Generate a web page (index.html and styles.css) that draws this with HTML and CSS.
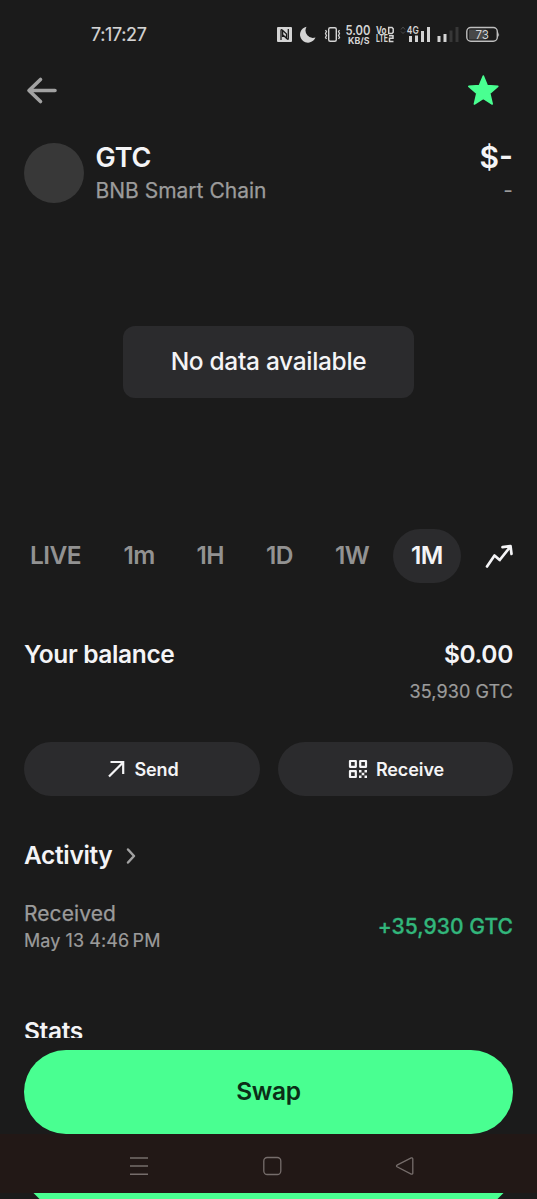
FILE: index.html
```html
<!DOCTYPE html>
<html lang="en">
<head>
<meta charset="utf-8">
<title>GTC</title>
<link rel="stylesheet" href="styles.css">
</head>
<body>
<div class="screen">
  <div class="status">
    <span class="clock">7:17:27</span>
    <svg class="status-icons" width="230" height="30" viewBox="274 20 230 30">
      <g fill="#d4d4d4">
        <rect x="277" y="27" width="15" height="15" rx="1"/>
        <path d="M281 40V30.500Q281 29 282.500 30.300L286.500 34V39M282.600 30V37M288.300 29V38.500Q288.300 40 287 38.800L283 35" fill="none" stroke="#1b1b1b" stroke-width="1.300"/>
        <path d="M306.500 26.800A8 8 0 1 0 315.500 37.500A7.500 7.500 0 0 1 306.500 26.800Z"/>
        <rect x="328.700" y="27.700" width="7.600" height="13.600" rx="1.500" fill="none" stroke="#d4d4d4" stroke-width="1.400"/>
        <path d="M325.500 30l1 1.500-1 2 1 2-1 2 1 1.500M339.500 30l-1 1.500 1 2-1 2 1 2-1 1.500" fill="none" stroke="#d4d4d4" stroke-width="1.300"/>
        <text x="345.500" y="35.300" class="rate" textLength="25" lengthAdjust="spacingAndGlyphs">5.00</text>
        <text x="348" y="43.700" class="unit" textLength="21.500" lengthAdjust="spacingAndGlyphs">KB/S</text>
        <text x="376" y="33.800" class="volte" textLength="10.500" lengthAdjust="spacingAndGlyphs">Vo</text>
        <text x="376" y="42.300" class="volte" textLength="12" lengthAdjust="spacingAndGlyphs">LTE</text>
        <path d="M388.700 27.500h3.300l1.200 1.200v3.500l-1.200 1.300h-3.300zM389 35.700h4v2.600h-3.500v3.300h4" fill="none" stroke="#d4d4d4" stroke-width="1.500"/>
        <path d="M401 29.500l2-2.500 2 2.500M401 31.500l2 2 2-2" fill="none" stroke="#4b4b4b" stroke-width="1"/>
        <text x="406.800" y="34.200" class="net" textLength="12" lengthAdjust="spacingAndGlyphs">4G</text>
        <path d="M409 36h3v6h-3zM415 35.500h3v6.500h-3zM421 31h3v11h-3zM427 27h3v15h-3zM437.500 36h3v6h-3zM443.500 34h3v8h-3z"/>
        <path d="M449.500 30.500h3v11.500h-3zM455.500 27h3v15h-3z" fill="#373737"/>
        <rect x="466.800" y="27.500" width="30.500" height="13.700" rx="4" fill="none" stroke="#bebebe" stroke-width="1.400"/>
        <path d="M469 29.500h17v10h-17z" fill="#484848"/>
        <path d="M498.300 32q1.500 2.500 0 5z"/>
        <text x="475.500" y="39.200" class="batt" textLength="13.500" lengthAdjust="spacingAndGlyphs">73</text>
      </g>
    </svg>
  </div>

  <div class="topbar">
    <svg class="back" width="32" height="30" viewBox="0 0 32 30"><path d="M29 15.500H3.500M14.500 4.500 3 15.500 14.500 26.500" fill="none" stroke="#a2a2a2" stroke-width="3.600" stroke-linecap="round" stroke-linejoin="round"/></svg>
    <svg class="star" width="32" height="32" viewBox="0 0 32 32"><path d="M16.300 2 20.200 11.500 30.800 12.400 22.700 19.300 25.200 30 16.300 24.400 7.400 30 9.900 19.300 1.800 12.400 12.400 11.500Z" fill="#49ff91" stroke="#49ff91" stroke-width="1.600" stroke-linejoin="round"/></svg>
  </div>

  <div class="token">
    <div class="avatar"></div>
    <div class="token-name"><div class="symbol">GTC</div><div class="chain">BNB Smart Chain</div></div>
    <div class="token-price"><div class="price">$-</div><div class="change">-</div></div>
  </div>

  <div class="chart"><div class="no-data">No data available</div></div>

  <div class="ranges">
    <span class="range">LIVE</span><span class="range">1m</span><span class="range">1H</span><span class="range">1D</span><span class="range">1W</span><span class="range active">1M</span>
    <svg class="trend" width="28" height="26" viewBox="0 0 28 26"><path d="M2 23.500 9.500 12.500 14.700 17 25 4M17.500 4.200 25.500 3 26.500 11" fill="none" stroke="#f4f4f6" stroke-width="2.700" stroke-linecap="round" stroke-linejoin="round"/></svg>
  </div>

  <div class="balance">
    <h2 class="heading">Your balance</h2>
    <div class="amounts"><div class="heading">$0.00</div><div class="qty">35,930 GTC</div></div>
  </div>

  <div class="actions">
    <div class="pill">
      <svg width="20" height="20" viewBox="0 0 20 20"><path d="M3 17.500 17 3.500M4.500 3H17.200V15" fill="none" stroke="#f4f4f6" stroke-width="2.200"/></svg>
      <span>Send</span>
    </div>
    <div class="pill">
      <svg width="20" height="20" viewBox="0 0 20 20"><path d="M2 2h5.800v5.800H2zM12.200 2H18v5.800h-5.800zM2 12.200h5.800V18H2z" fill="none" stroke="#f4f4f6" stroke-width="2.200" stroke-linejoin="round"/><path d="M11 11h2.500v2.500H11zM16.500 11H19v2.500h-2.500zM13.700 13.700h2.600v2.600h-2.600zM11 16.500h2.500V19H11zM16.500 16.500H19V19h-2.500z" fill="#f4f4f6"/></svg>
      <span>Receive</span>
    </div>
  </div>

  <div class="activity-head">
    <h2 class="heading">Activity</h2>
    <svg width="12" height="18" viewBox="0 0 12 18"><path d="M3 2.500 9 9 3 15.500" fill="none" stroke="#a2a2a2" stroke-width="2.500" stroke-linecap="round" stroke-linejoin="round"/></svg>
  </div>
  <div class="entry">
    <div><div class="kind">Received</div><div class="date">May 13 4:46&#8201;PM</div></div>
    <div class="delta">+35,930 GTC</div>
  </div>

  <div class="stats"><h2 class="heading">Stats</h2></div>

  <div class="swap">Swap</div>
  <div class="navbar">
    <svg width="20" height="20" viewBox="0 0 20 20"><path d="M1 2h18M1 10h18M1 18.200h18" fill="none" stroke="#766d6b" stroke-width="1.500"/></svg>
    <svg width="20" height="20" viewBox="0 0 20 20"><rect x="1.800" y="1.500" width="17" height="17" rx="3.500" fill="none" stroke="#766d6b" stroke-width="1.300"/></svg>
    <svg width="20" height="20" viewBox="0 0 20 20"><path d="M2 9.200 16.200 1.900Q17.800 1.500 17.800 3V17Q17.800 18.500 16.200 18.100L2 10.800Q1 10 2 9.200Z" fill="none" stroke="#766d6b" stroke-width="1.300"/></svg>
  </div>
  <svg class="edge" width="537" height="6" viewBox="0 0 537 6"><path d="M33.500 0H503.500L497.500 6H39.500Z" fill="#49ff91"/></svg>
</div>
</body>
</html>
```

FILE: styles.css
```css
body { margin: 0; background: #1b1b1b; }
.screen { width: 537px; height: 1199px; overflow: hidden; background: #1b1b1b; color: #f4f4f6; font-family: Inter, "Liberation Sans", sans-serif; display: flex; flex-direction: column; white-space: nowrap; }
.screen > * { flex: none; box-sizing: border-box; }
svg { display: block; flex: none; }
h2 { margin: 0; }

.status { height: 69px; padding: 20px 33px 0 91px; display: flex; justify-content: space-between; }
.clock { font-size: 18px; line-height: 30px; letter-spacing: -0.35px; color: #d4d4d4; -webkit-text-stroke: 0.2px; }
.rate { font: 600 12.5px Inter, sans-serif; }
.unit { font: 700 9px Inter, sans-serif; }
.volte { font: 700 10px Inter, sans-serif; }
.net { font: 600 11px Inter, sans-serif; }
.batt { font: 400 12px Inter, sans-serif; }

.topbar { height: 74px; padding: 6px 38px 0 26px; display: flex; justify-content: space-between; }
.star { margin-top: -1px; }

.token { height: 60px; padding: 0 24px; display: flex; }
.avatar { width: 60px; height: 60px; border-radius: 50%; background: #383838; margin-right: 12px; }
.token-name { flex: 1; }
.symbol { font-size: 27px; font-weight: 600; line-height: 30px; letter-spacing: -0.2px; margin-left: -0.5px; }
.chain { font-size: 21px; line-height: 35px; margin-left: -0.5px; color: #9b9b9b; -webkit-text-stroke: 0.25px; }
.token-price { text-align: right; }
.price { font-size: 30px; font-weight: 600; line-height: 28px; }
.change { font-size: 21px; line-height: 40px; color: #9b9b9b; }

.chart { height: 326px; padding-top: 123px; display: flex; justify-content: center; align-items: flex-start; }
.no-data { width: 291px; height: 72px; line-height: 70px; border-radius: 12px; background: #2b2b2d; text-align: center; font-size: 24.5px; font-weight: 500; letter-spacing: -0.32px; }

.ranges { height: 54px; padding: 0 24px 0 30px; display: grid; grid-template-columns: 93.5px 73px 69.5px 69px 58px 68px 1fr; align-items: center; }
.range { height: 54px; font-size: 24.5px; font-weight: 600; line-height: 52px; letter-spacing: -0.6px; color: #929292; }
.active { background: #2b2b2d; color: #f4f4f6; border-radius: 27px; text-align: center; }
.trend { justify-self: end; }

.balance { height: 159px; padding: 56px 24px 0; display: flex; justify-content: space-between; }
.heading { font-size: 24.5px; font-weight: 600; line-height: 30px; letter-spacing: -0.35px; }
.amounts { text-align: right; }
.qty { margin-top: 8px; font-size: 18px; line-height: 30px; letter-spacing: 0.1px; color: #9b9b9b; -webkit-text-stroke: 0.2px; }

.actions { height: 54px; padding: 0 24px; display: grid; grid-template-columns: 1fr 1fr; gap: 18px; }
.pill { display: flex; align-items: center; justify-content: center; gap: 8px; height: 54px; padding-left: 1.5px; box-sizing: border-box; border-radius: 27px; background: #2b2b2d; font-size: 18px; font-weight: 600; letter-spacing: -0.1px; }

.activity-head { height: 104px; padding: 44px 24px 0; display: flex; gap: 13px; }
.activity-head svg { margin-top: 7px; }
.entry { height: 53px; padding: 0 24px; display: flex; justify-content: space-between; align-items: center; }
.kind { font-size: 21px; line-height: 27px; color: #9b9b9b; letter-spacing: 0.08px; -webkit-text-stroke: 0.25px; }
.date { font-size: 18px; line-height: 27px; color: #9b9b9b; letter-spacing: 0.08px; -webkit-text-stroke: 0.2px; }
.delta { font-size: 21px; font-weight: 500; line-height: 53px; letter-spacing: 0.05px; color: #32b67b; -webkit-text-stroke: 0.3px; }

.stats { height: 85px; margin-bottom: 12px; padding: 63px 24px 0; overflow: hidden; }
.swap { height: 83.5px; margin: 0 24px 0.5px; border-radius: 42px; background: #49ff91; text-align: center; line-height: 82px; font-size: 24.5px; font-weight: 600; letter-spacing: -0.35px; color: #0b2e17; }
.navbar { height: 59px; padding: 22px 122px 0 129px; display: flex; justify-content: space-between; background: #221816; }
```
